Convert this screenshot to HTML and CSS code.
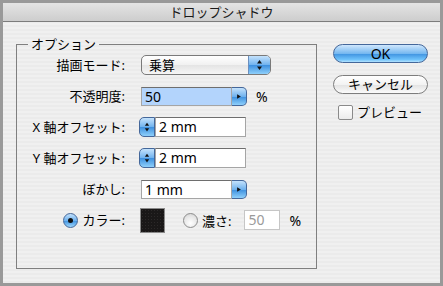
FILE: index.html
```html
<!DOCTYPE html>
<html lang="ja">

<head>
    <meta charset="UTF-8">
    <title>ドロップシャドウ</title>
    <link rel="stylesheet" href="styles.css">
</head>

<body>
    <div class="window">
        <div class="titlebar">ドロップシャドウ</div>

        <div class="content">
            <fieldset class="group">
                <legend>オプション</legend>

                <div class="form">
                    <div class="lbl">描画モード:</div>
                    <div class="popup">
                        <span class="popup-text">乗算</span>
                        <span class="popup-arrows">
                            <svg width="21" height="20" viewBox="0 0 21 20">
                                <path d="M8 8.5 L10.5 5 L13 8.5 Z" fill="#111" />
                                <path d="M8 11.5 L10.5 15 L13 11.5 Z" fill="#111" />
                            </svg>
                        </span>
                    </div>

                    <div class="lbl">不透明度:</div>
                    <div class="combo">
                        <div class="field field-selected">50</div>
                        <span class="menu-btn">
                            <svg width="15" height="19" viewBox="0 0 15 19">
                                <path d="M5.5 7 L9.5 9.5 L5.5 12 Z" fill="#111" />
                            </svg>
                        </span>
                        <span class="unit">%</span>
                    </div>

                    <div class="lbl">X 軸オフセット:</div>
                    <div class="combo stepped">
                        <span class="stepper">
                            <svg width="16" height="20" viewBox="0 0 16 20">
                                <path d="M5.5 8.5 L8 5 L10.5 8.5 Z" fill="#111" />
                                <path d="M5.5 11.5 L8 15 L10.5 11.5 Z" fill="#111" />
                            </svg>
                        </span>
                        <div class="field field-wide">2 mm</div>
                    </div>

                    <div class="lbl">Y 軸オフセット:</div>
                    <div class="combo stepped">
                        <span class="stepper">
                            <svg width="16" height="20" viewBox="0 0 16 20">
                                <path d="M5.5 8.5 L8 5 L10.5 8.5 Z" fill="#111" />
                                <path d="M5.5 11.5 L8 15 L10.5 11.5 Z" fill="#111" />
                            </svg>
                        </span>
                        <div class="field field-wide">2 mm</div>
                    </div>

                    <div class="lbl">ぼかし:</div>
                    <div class="combo">
                        <div class="field">1 mm</div>
                        <span class="menu-btn">
                            <svg width="15" height="19" viewBox="0 0 15 19">
                                <path d="M5.5 7 L9.5 9.5 L5.5 12 Z" fill="#111" />
                            </svg>
                        </span>
                    </div>

                    <div class="lbl lbl-radio">
                        <span class="radio radio-on"><span class="dot"></span></span>
                        カラー:
                    </div>
                    <div class="combo color-row">
                        <span class="swatch"></span>
                        <span class="radio"></span>
                        <span class="radio-label">濃さ:</span>
                        <div class="field field-disabled">50</div>
                        <span class="unit">%</span>
                    </div>
                </div>
            </fieldset>

            <div class="side">
                <div class="btn btn-default">OK</div>
                <div class="btn">キャンセル</div>
                <div class="check">
                    <span class="box"></span>
                    <span>プレビュー</span>
                </div>
            </div>
        </div>
    </div>
</body>

</html>
```

FILE: styles.css
```css
:root {
    --aqua-light: #c4e2fc;
    --aqua-mid: #6fb2ee;
    --aqua-dark: #3c8fde;
    --aqua-border: #44679a;
    --field-border: #8b8b8b;
}

body {
    margin: 0;
    font-family: "Noto Sans", "Noto Sans CJK JP", sans-serif;
    font-size: 13px;
    color: #000;
}

.window {
    width: 443px;
    height: 286px;
    box-sizing: border-box;
    border: 3px solid #999;
    background: repeating-linear-gradient(#f0f0f0 0 2px, #ebebeb 2px 4px);
}

.titlebar {
    height: 18px;
    line-height: 18px;
    text-align: center;
    border-bottom: 1px solid #7c7c7c;
    background: linear-gradient(#e4e4e4, #cdcdcd);
    color: #1a1a1a;
    font-size: 13px;
}

.content {
    display: flex;
    align-items: flex-start;
    padding-left: 13px;
}

.group {
    margin: 14px 0 0 0;
    padding: 3px 0 0 0;
    width: 301px;
    height: 233px;
    box-sizing: border-box;
    border: 1px solid #7f7f7f;
}

.group legend {
    margin-left: 11px;
    padding: 0 3px;
    line-height: 16px;
}

.form {
    display: grid;
    grid-template-columns: 108px auto;
    grid-auto-rows: 20px;
    column-gap: 14px;
    row-gap: 11px;
    align-items: center;
}

.lbl {
    text-align: right;
    line-height: 16px;
    white-space: nowrap;
}

.lbl-radio {
    display: flex;
    justify-content: flex-end;
    align-items: center;
    gap: 5px;
    height: 25px;
}

.popup {
    margin-left: 2px;
    width: 130px;
    height: 20px;
    box-sizing: border-box;
    display: flex;
    border: 1px solid #7a7a7a;
    border-radius: 5px;
    overflow: hidden;
    background: linear-gradient(#ffffff, #f1f1f1 50%, #e4e4e4 51%, #f6f6f6);
}

.popup-text {
    flex: 1;
    padding-left: 7px;
    line-height: 18px;
}

.popup-arrows {
    width: 21px;
    display: flex;
    align-items: center;
    justify-content: center;
    border-left: 1px solid #6b8fbf;
    background: linear-gradient(var(--aqua-light), var(--aqua-mid) 50%, var(--aqua-dark) 51%, #8fd0fb);
}

.combo {
    display: flex;
    align-items: center;
    margin-left: 2px;
}

.stepped {
    margin-left: 0;
}

.field {
    width: 91px;
    height: 19px;
    box-sizing: border-box;
    padding-left: 3px;
    line-height: 17px;
    font-size: 14px;
    background: #fff;
    border: 1px solid #a5a5a5;
    border-top-color: #6e6e6e;
}

.field-selected {
    background: #b3d4fc;
}

.field-wide {
    height: 20px;
    line-height: 18px;
}

.field-disabled {
    width: 36px;
    height: 20px;
    line-height: 18px;
    color: #9a9a9a;
    border-color: #c6c6c6;
}

.menu-btn {
    width: 15px;
    height: 19px;
    box-sizing: border-box;
    display: flex;
    align-items: center;
    justify-content: center;
    border: 1px solid var(--aqua-border);
    border-left: none;
    border-radius: 0 5px 5px 0;
    background: linear-gradient(var(--aqua-light), var(--aqua-mid) 50%, var(--aqua-dark) 51%, #8fd0fb);
}

.menu-btn svg,
.stepper svg,
.popup-arrows svg {
    display: block;
}

.unit {
    margin-left: 9px;
    font-size: 14px;
}

.stepper {
    width: 16px;
    height: 20px;
    box-sizing: border-box;
    display: flex;
    align-items: center;
    justify-content: center;
    border: 1px solid var(--aqua-border);
    border-radius: 5px 0 0 5px;
    background: linear-gradient(var(--aqua-light), var(--aqua-mid) 50%, var(--aqua-dark) 51%, #8fd0fb);
}

.color-row {
    height: 25px;
    margin-left: 1px;
}

.swatch {
    width: 25px;
    height: 25px;
    box-sizing: border-box;
    border: 1px solid #8a8a8a;
    background-color: #1a1818;
    background-image: radial-gradient(#2c2929 0.6px, transparent 0.8px);
    background-size: 3px 3px;
    margin-right: 18px;
}

.radio {
    width: 15px;
    height: 15px;
    box-sizing: border-box;
    border-radius: 50%;
    border: 1px solid #8c8c8c;
    background: radial-gradient(circle at 50% 70%, #ffffff, #e6e6e6 60%, #cfcfcf);
    display: flex;
    align-items: center;
    justify-content: center;
}

.radio-on {
    border-color: var(--aqua-border);
    background: linear-gradient(var(--aqua-light), var(--aqua-mid) 50%, var(--aqua-dark) 51%, #9fd8fd);
}

.dot {
    width: 5px;
    height: 5px;
    border-radius: 50%;
    background: #111;
}

.radio-label {
    margin-left: 4px;
    margin-right: 13px;
}

.side {
    display: flex;
    flex-direction: column;
    margin: 22px 0 0 16px;
    gap: 12px;
}

.btn {
    width: 95px;
    height: 19px;
    box-sizing: border-box;
    border: 1px solid #7d7d7d;
    border-radius: 10px;
    text-align: center;
    line-height: 17px;
    background: linear-gradient(#ffffff, #f3f3f3 50%, #e2e2e2 51%, #fbfbfb);
}

.btn-default {
    font-size: 14px;
    border-color: var(--aqua-border);
    background: linear-gradient(#cfe7fd, #76b8f0 50%, #3e92e0 51%, #6ec2fb 85%, #b3e2fe);
}

.check {
    display: flex;
    align-items: center;
    gap: 4px;
    padding-left: 5px;
    margin-top: -2px;
    line-height: 16px;
}

.box {
    width: 15px;
    height: 15px;
    box-sizing: border-box;
    border: 1px solid #8a8a8a;
    border-radius: 2px;
    background: linear-gradient(#ffffff, #ececec);
}
```
